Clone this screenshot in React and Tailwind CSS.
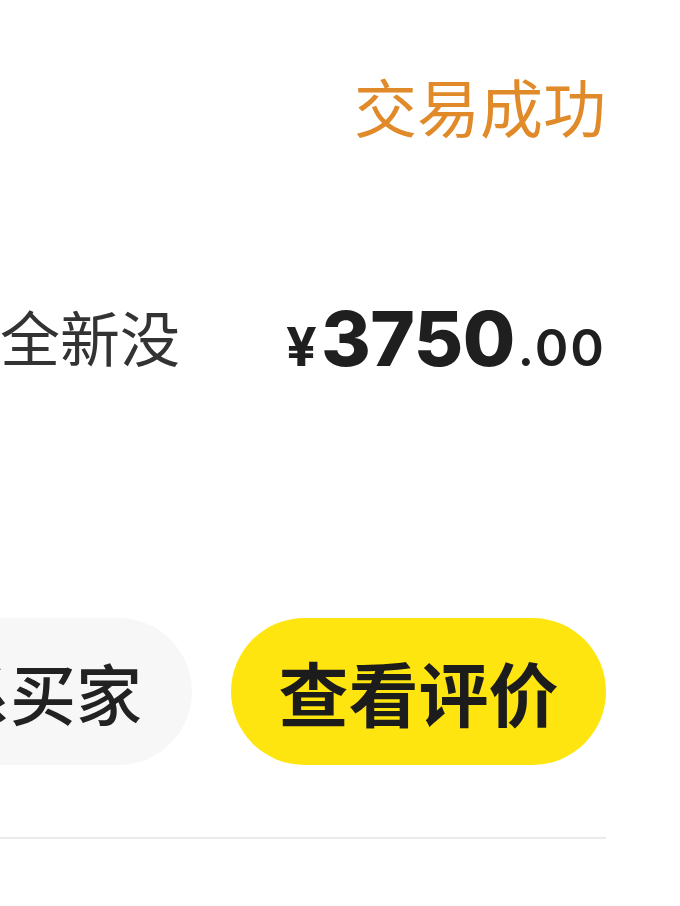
import React from "react";

const cjk = "font-['Noto_Sans_CJK_SC','Noto_Sans',sans-serif]";

function Price() {
  return (
    <span className="-mt-[2px] flex items-baseline font-['Inter',sans-serif] text-[#1f1f1f] leading-none">
      <span className="text-[54px] font-bold mr-[4px]">¥</span>
      <span className="text-[76px] font-extrabold tracking-[-0.5px]">3750</span>
      <span className="ml-[3px] text-[51px] font-semibold tracking-[2px]">.00</span>
    </span>
  );
}

export default function App() {
  return (
    <div className={`w-[680px] h-[906px] bg-white overflow-hidden ${cjk}`}>
      <div className="pr-[74px]">
        <div className="flex justify-end pt-[73px]">
          <span className="text-[63px] leading-none text-[#e08a2a]">交易成功</span>
        </div>

        <div className="mt-[166px] flex items-start justify-between">
          <span className="mt-[4px] text-[60px] leading-none text-[#333333] whitespace-nowrap">全新没</span>
          <Price />
        </div>

        <div className="mt-[242px] flex justify-end gap-[39px]">
          <button className="shrink-0 w-[320px] h-[147px] rounded-full bg-[#f7f7f7] pr-[50px] text-[66px] font-medium text-[#222222] flex items-center justify-end">
            联系买家
          </button>
          <button className="shrink-0 w-[375px] h-[147px] rounded-full bg-[#ffe50f] text-[70px] font-bold text-[#1c1c1c] flex items-center justify-center">
            查看评价
          </button>
        </div>

        <div className="mt-[72px] h-[2px] bg-[#ebebeb]" />
      </div>
    </div>
  );
}
